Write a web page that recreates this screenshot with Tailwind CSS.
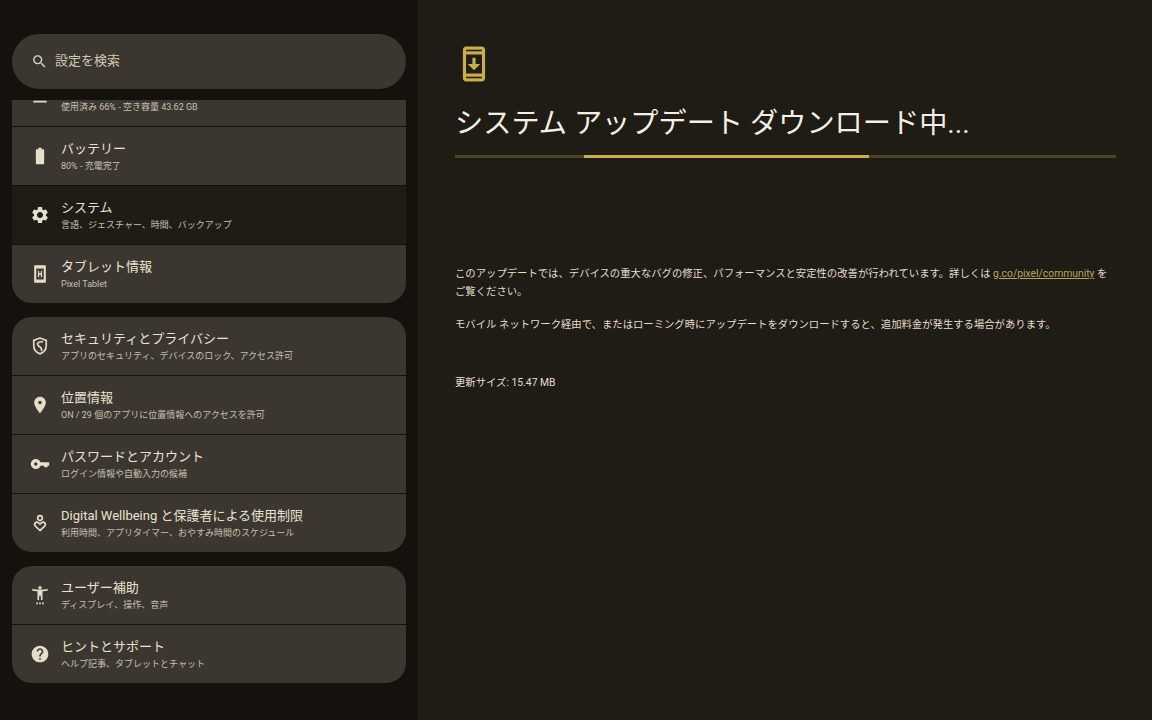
<!DOCTYPE html>
<html lang="ja">
<head>
  <meta charset="UTF-8" />
  <title>設定</title>
  <script src="https://cdn.jsdelivr.net/npm/@tailwindcss/browser@4"></script>
</head>
<body class="h-[720px] w-[1152px] overflow-hidden bg-[#1f1b15] font-['Roboto','Noto_Sans_CJK_JP',sans-serif]">
  <div class="flex h-full">
    <!-- Sidebar -->
    <aside class="flex h-full w-[418px] shrink-0 flex-col bg-[#15110c] px-3 pt-[34px]">
      <div class="flex h-[55px] shrink-0 items-center gap-[7px] rounded-full bg-[#3b362f] pb-px pl-[19px] text-[13px] text-[#cfc8b7]">
        <svg class="h-[17px] w-[17px] fill-[#d8d2c2]" viewBox="0 0 24 24"><path d="M15.5 14h-.79l-.28-.27C15.41 12.59 16 11.11 16 9.5 16 5.91 13.09 3 9.5 3S3 5.91 3 9.5 5.91 16 9.5 16c1.61 0 3.09-.59 4.23-1.57l.27.28v.79l5 4.99L20.49 19l-4.99-5zm-6 0C7.01 14 5 11.99 5 9.5S7.01 5 9.5 5 14 7.01 14 9.5 11.99 14 9.5 14z"/></svg>
        <span>設定を検索</span>
      </div>

      <div class="mt-[11px] min-h-0 flex-1 overflow-hidden">
        <!-- First group, scrolled under the search bar -->
        <div class="-mt-[32px] flex flex-col gap-px overflow-hidden rounded-[20px]">
          <div class="flex h-[58px] items-center gap-[11px] bg-[#3b362f] pl-[18px]">
            <svg class="h-5 w-5 fill-[#e4decd]" viewBox="0 0 24 24"><path d="M4 4h16v4H4zM4 10h16v4H4zM4 16.500h16v2H4z"/></svg>
            <div>
              <div class="h-[18px]"></div>
              <div class="mt-[2px] text-[9px] leading-[13px] text-[#c6c0b1]">使用済み 66% - 空き容量 43.62 GB</div>
            </div>
          </div>
          <div class="flex h-[58px] items-center gap-[11px] bg-[#3b362f] pl-[18px]">
            <svg class="h-5 w-5 fill-[#e4decd]" viewBox="0 0 24 24"><path d="M15.67 4H14V2h-4v2H8.33C7.6 4 7 4.6 7 5.33v15.33C7 21.4 7.6 22 8.33 22h7.33c.74 0 1.34-.6 1.34-1.33V5.33C17 4.6 16.4 4 15.67 4z"/></svg>
            <div>
              <div class="text-[13px] leading-[18px] text-[#e9e2d3]">バッテリー</div>
              <div class="mt-[2px] text-[9px] leading-[13px] text-[#c6c0b1]">80% - 充電完了</div>
            </div>
          </div>
          <div class="flex h-[58px] items-center gap-[11px] bg-[#1f1b15] pl-[18px]">
            <svg class="h-5 w-5 fill-[#e4decd]" viewBox="0 0 24 24"><path d="M19.14 12.94c.04-.3.06-.61.06-.94 0-.32-.02-.64-.07-.94l2.03-1.58c.18-.14.23-.41.12-.61l-1.92-3.32c-.12-.22-.37-.29-.59-.22l-2.39.96c-.5-.38-1.03-.7-1.62-.94l-.36-2.54c-.04-.24-.24-.41-.48-.41h-3.84c-.24 0-.43.17-.47.41l-.36 2.54c-.59.24-1.13.57-1.62.94l-2.39-.96c-.22-.08-.47 0-.59.22L2.74 8.87c-.12.21-.08.47.12.61l2.03 1.58c-.05.3-.09.63-.09.94s.02.64.07.94l-2.03 1.58c-.18.14-.23.41-.12.61l1.92 3.32c.12.22.37.29.59.22l2.39-.96c.5.38 1.03.7 1.62.94l.36 2.54c.05.24.24.41.48.41h3.84c.24 0 .44-.17.47-.41l.36-2.54c.59-.24 1.13-.56 1.62-.94l2.39.96c.22.08.47 0 .59-.22l1.92-3.32c.12-.22.07-.47-.12-.61l-2.01-1.58zM12 15.6c-1.98 0-3.6-1.62-3.6-3.6s1.62-3.6 3.6-3.6 3.6 1.62 3.6 3.6-1.62 3.6-3.6 3.6z"/></svg>
            <div>
              <div class="text-[13px] leading-[18px] text-[#e9e2d3]">システム</div>
              <div class="mt-[2px] text-[9px] leading-[13px] text-[#c6c0b1]">言語、ジェスチャー、時間、バックアップ</div>
            </div>
          </div>
          <div class="flex h-[58px] items-center gap-[11px] bg-[#3b362f] pl-[18px]">
            <svg class="h-5 w-5 fill-[#e4decd]" viewBox="0 0 24 24"><path fill-rule="evenodd" d="M6 1.500h12a1 1 0 0 1 1 1v19a1 1 0 0 1-1 1H6a1 1 0 0 1-1-1v-19a1 1 0 0 1 1-1zm1.500 4v13h9v-13z"/><path d="M9.500 8H11v3h2V8h1.500v8H13v-3h-2v3H9.500z"/></svg>
            <div>
              <div class="text-[13px] leading-[18px] text-[#e9e2d3]">タブレット情報</div>
              <div class="mt-[2px] text-[9px] leading-[13px] text-[#c6c0b1]">Pixel Tablet</div>
            </div>
          </div>
        </div>

        <!-- Second group -->
        <div class="mt-[14px] flex flex-col gap-px overflow-hidden rounded-[20px]">
          <div class="flex h-[58px] items-center gap-[11px] bg-[#3b362f] pl-[18px]">
            <svg class="h-5 w-5 fill-none stroke-[#e4decd] stroke-2" viewBox="0 0 24 24"><path d="M12 2.500 4.500 5.300v5.900c0 4.700 3.100 8.800 7.500 10.200 4.400-1.400 7.500-5.500 7.500-10.200V5.300z"/><path d="M15.500 7C10 6.500 7.500 9 10 11.500s5.500 3 3.500 6.500"/></svg>
            <div>
              <div class="text-[13px] leading-[18px] text-[#e9e2d3]">セキュリティとプライバシー</div>
              <div class="mt-[2px] text-[9px] leading-[13px] text-[#c6c0b1]">アプリのセキュリティ、デバイスのロック、アクセス許可</div>
            </div>
          </div>
          <div class="flex h-[58px] items-center gap-[11px] bg-[#3b362f] pl-[18px]">
            <svg class="h-5 w-5 fill-[#e4decd]" viewBox="0 0 24 24"><path d="M12 2C8.130 2 5 5.130 5 9c0 5.250 7 13 7 13s7-7.750 7-13c0-3.870-3.130-7-7-7zm0 9c-1.100 0-2-.9-2-2s.9-2 2-2 2 .9 2 2-.9 2-2 2z"/></svg>
            <div>
              <div class="text-[13px] leading-[18px] text-[#e9e2d3]">位置情報</div>
              <div class="mt-[2px] text-[9px] leading-[13px] text-[#c6c0b1]">ON / 29 個のアプリに位置情報へのアクセスを許可</div>
            </div>
          </div>
          <div class="flex h-[58px] items-center gap-[11px] bg-[#3b362f] pl-[18px]">
            <svg class="h-5 w-5 fill-[#e4decd]" viewBox="0 0 24 24"><path d="M12.650 10C11.830 7.670 9.610 6 7 6c-3.310 0-6 2.690-6 6s2.690 6 6 6c2.610 0 4.830-1.670 5.650-4H17v2h4v-2h2v-4H12.650zM7 14c-1.100 0-2-.9-2-2s.9-2 2-2 2 .9 2 2-.9 2-2 2z"/></svg>
            <div>
              <div class="text-[13px] leading-[18px] text-[#e9e2d3]">パスワードとアカウント</div>
              <div class="mt-[2px] text-[9px] leading-[13px] text-[#c6c0b1]">ログイン情報や自動入力の候補</div>
            </div>
          </div>
          <div class="flex h-[58px] items-center gap-[11px] bg-[#3b362f] pl-[18px]">
            <svg class="h-5 w-5 fill-none stroke-[#e4decd] stroke-2" viewBox="0 0 24 24"><circle cx="12" cy="6" r="2.800"/><path d="M12 21l-5.500-5.200c-2.600-2.700 1-6.500 3.500-4.200l2 1.800 2-1.800c2.500-2.300 6.100 1.500 3.500 4.200z"/></svg>
            <div>
              <div class="text-[13px] leading-[18px] text-[#e9e2d3]">Digital Wellbeing と保護者による使用制限</div>
              <div class="mt-[2px] text-[9px] leading-[13px] text-[#c6c0b1]">利用時間、アプリタイマー、おやすみ時間のスケジュール</div>
            </div>
          </div>
        </div>

        <!-- Third group -->
        <div class="mt-[14px] flex flex-col gap-px overflow-hidden rounded-[20px]">
          <div class="flex h-[58px] items-center gap-[11px] bg-[#3b362f] pl-[18px]">
            <svg class="h-5 w-5 fill-[#e4decd]" viewBox="0 0 24 24"><path d="M21 4.500c-2.610.7-6.170 1-9 1s-6.390-.3-9-1l-.5 2c1.860.5 4.500.83 6.500 1V18h2v-5h2v5h2V7.500c2-.17 4.640-.5 6.500-1zM12 5c1.100 0 2-.6 2-1.700S13.100 1.300 12 1.300s-2 .9-2 2S10.900 5 12 5z"/><path d="M7.500 21h2v2h-2zM11 21h2v2h-2zM14.500 21h2v2h-2z"/></svg>
            <div>
              <div class="text-[13px] leading-[18px] text-[#e9e2d3]">ユーザー補助</div>
              <div class="mt-[2px] text-[9px] leading-[13px] text-[#c6c0b1]">ディスプレイ、操作、音声</div>
            </div>
          </div>
          <div class="flex h-[58px] items-center gap-[11px] bg-[#3b362f] pl-[18px]">
            <svg class="h-5 w-5 fill-[#e4decd]" viewBox="0 0 24 24"><path d="M12 2C6.480 2 2 6.480 2 12s4.480 10 10 10 10-4.480 10-10S17.520 2 12 2zm1 17h-2v-2h2v2zm2.070-7.750l-.9.920C13.450 12.900 13 13.500 13 15h-2v-.5c0-1.100.45-2.100 1.170-2.830l1.240-1.260c.37-.36.59-.86.59-1.410 0-1.100-.9-2-2-2s-2 .9-2 2H8c0-2.210 1.790-4 4-4s4 1.790 4 4c0 .88-.36 1.680-.93 2.250z"/></svg>
            <div>
              <div class="text-[13px] leading-[18px] text-[#e9e2d3]">ヒントとサポート</div>
              <div class="mt-[2px] text-[9px] leading-[13px] text-[#c6c0b1]">ヘルプ記事、タブレットとチャット</div>
            </div>
          </div>
        </div>
      </div>
    </aside>

    <!-- Detail pane -->
    <main class="flex-1 pl-[37px] pr-[36px] pt-[45px]">
      <svg class="h-[38px] w-[38px] fill-[#c8ad52]" viewBox="0 0 24 24"><path d="M17 1.010 7 1c-1.100 0-2 .9-2 2v18c0 1.100.9 2 2 2h10c1.100 0 2-.9 2-2V3c0-1.100-.9-1.990-2-1.990zM17 21H7v-1h10v1zm0-3H7V6h10v12zM7 4V3h10v1H7zM16 12h-3V8h-2v4H8l4 4z"/></svg>
      <h1 class="mt-[21px] text-[28.200px] leading-[40px] text-[#f4f0e6]">システム アップデート ダウンロード中...</h1>
      <div class="mt-[11px] h-[3px] bg-[#4a4423] pl-[129px]">
        <div class="h-full w-[285px] bg-[#c8ad52]"></div>
      </div>
      <div class="mt-[107px] text-[10.350px] leading-[18px] text-[#e4decd]">
        <p>このアップデートでは、デバイスの重大なバグの修正、パフォーマンスと安定性の改善が行われています。詳しくは <a class="text-[#b6a660] underline">g.co/pixel/community</a> をご覧ください。</p>
        <p class="mt-[15px]">モバイル ネットワーク経由で、またはローミング時にアップデートをダウンロードすると、追加料金が発生する場合があります。</p>
        <p class="mt-[40px]">更新サイズ: 15.47 MB</p>
      </div>
    </main>
  </div>
</body>
</html>
